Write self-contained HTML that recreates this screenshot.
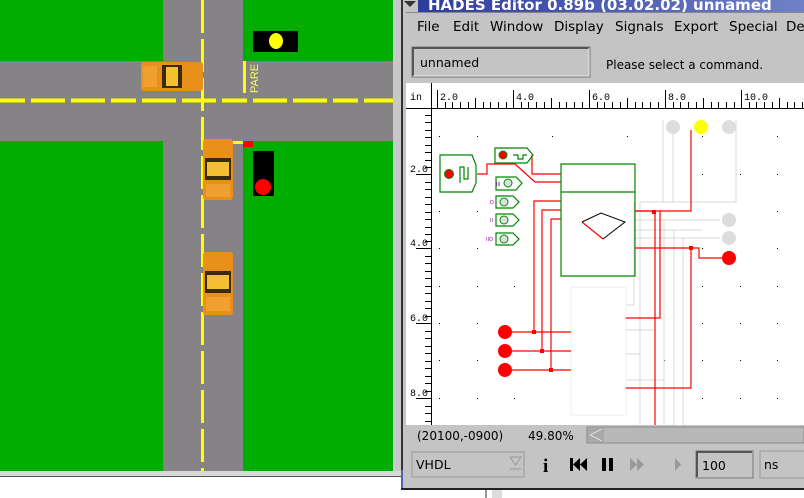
<!DOCTYPE html>
<html><head><meta charset="utf-8"><style>
*{margin:0;padding:0;box-sizing:border-box}
body{width:804px;height:498px;overflow:hidden;background:#fff;position:relative;font-family:"DejaVu Sans","Liberation Sans",sans-serif}
.a{position:absolute}
</style></head><body>
<svg class="a" style="left:0;top:0" width="804" height="498" viewBox="0 0 804 498" xmlns="http://www.w3.org/2000/svg">
<rect x="0" y="0" width="393" height="471" fill="#00ad00"/>
<rect x="393" y="0" width="8" height="476" fill="#c8c8c8"/>
<rect x="0" y="471" width="401" height="5" fill="#d8d8d8"/>
<rect x="0" y="476" width="401" height="1" fill="#555"/>
<rect x="0" y="61" width="393" height="80" fill="#858385"/>
<rect x="163" y="0" width="80" height="471" fill="#858385"/>
<line x1="0" y1="100.5" x2="393" y2="100.5" stroke="#ffff00" stroke-width="4" stroke-dasharray="25 6 34 6 34 6 0 0" />
<line x1="202.5" y1="0" x2="202.5" y2="471" stroke="#ffff00" stroke-width="3" stroke-dasharray="33 6"/>
<rect x="243" y="61" width="3" height="32" fill="#ffff00"/>
<text x="0" y="0" transform="translate(258,93) rotate(-90)" font-size="11" fill="#ffff60" font-family="Liberation Sans">PARE</text>
<rect x="233" y="141" width="10" height="3" fill="#ffff00"/>
<rect x="243" y="141" width="10" height="6" fill="#ff0000"/>
<rect x="253" y="31" width="45" height="21" fill="#000"/>
<ellipse cx="276" cy="41" rx="7" ry="8" fill="#ffff00"/>
<rect x="253" y="151" width="21" height="45" fill="#000"/>
<circle cx="263" cy="187" r="8" fill="#ff0000"/>
<g><rect x="141" y="62" width="62" height="29" rx="3" fill="#e8901a"/><rect x="162" y="65" width="20" height="23" fill="#3a2a10"/><rect x="166" y="67" width="12" height="19" fill="#f4c030"/><rect x="143" y="66" width="14" height="21" fill="#f0a030"/></g>
<g><rect x="203" y="139" width="30" height="61" rx="3" fill="#e8901a"/><rect x="205" y="158" width="26" height="22" fill="#3a2a10"/><rect x="207" y="162" width="22" height="14" fill="#f4c030"/><rect x="206" y="184" width="24" height="13" fill="#f0a030"/></g>
<g><rect x="203" y="252" width="30" height="63" rx="3" fill="#e8901a"/><rect x="205" y="271" width="26" height="22" fill="#3a2a10"/><rect x="207" y="275" width="22" height="14" fill="#f4c030"/><rect x="206" y="297" width="24" height="14" fill="#f0a030"/></g>

<rect x="401" y="0" width="403" height="490" fill="#c4c4c4"/>
<rect x="401" y="0" width="2" height="490" fill="#333"/>
<rect x="401" y="470" width="22" height="20" fill="#5060b8"/>
<rect x="403" y="470" width="20" height="18" fill="#c4c4c4"/>
<rect x="401" y="488" width="403" height="2" fill="#222"/>
<defs><linearGradient id="tb" x1="0" x2="1"><stop offset="0" stop-color="#2a3a9a"/><stop offset="1" stop-color="#7080c8"/></linearGradient></defs>
<rect x="403" y="0" width="401" height="12" fill="url(#tb)"/>
<rect x="403" y="0" width="15" height="12" fill="#c4c4c4"/>
<path d="M404 1 L416 1 L410 7 Z" fill="#333"/>
<text x="428" y="10" font-size="15" font-weight="bold" fill="#fff">HADES Editor 0.89b (03.02.02)   unnamed</text>
<rect x="406" y="12" width="398" height="1" fill="#888"/>
<g font-size="13.5" fill="#000">
<text x="417" y="31">File</text><text x="453" y="31">Edit</text><text x="490" y="31">Window</text><text x="554" y="31">Display</text><text x="615" y="31">Signals</text><text x="674" y="31">Export</text><text x="729" y="31">Special</text><text x="786" y="31">De</text>
</g>
<rect x="412" y="47" width="178" height="30" fill="#c4c4c4" stroke="#777" stroke-width="1"/>
<path d="M413 76 V48 H589" stroke="#555" stroke-width="2" fill="none"/>
<path d="M413 76 H589 V48" stroke="#eee" stroke-width="1" fill="none"/>
<text x="420" y="67" font-size="12.5">unnamed</text>
<text x="606" y="69" font-size="12">Please select a command.</text>
<rect x="406" y="83" width="398" height="342" fill="#fff"/>
<g stroke="#000" stroke-width="1">
<line x1="406" y1="108.5" x2="804" y2="108.5"/>
<line x1="431.5" y1="83" x2="431.5" y2="425"/>
</g>
<g font-size="10" font-family="Liberation Mono" fill="#000">
<text x="410" y="100">in</text>
<text x="440" y="100">2.0</text><text x="516" y="100">4.0</text><text x="592" y="100">6.0</text><text x="668" y="100">8.0</text><text x="744" y="100">10.0</text>
<text x="410" y="172">2.0</text><text x="410" y="246">4.0</text><text x="410" y="321">6.0</text><text x="410" y="396">8.0</text>
</g>
<g stroke="#000" stroke-width="1">
<path d="M437.5 90V108M513.5 90V108M589.5 90V108M665.5 90V108M741.5 90V108 M445.5 102V108M452.5 102V108M460.5 102V108M468.5 102V108M475.5 98V108M483.5 102V108M490.5 102V108M498.5 102V108M506.5 102V108M521.5 102V108M528.5 102V108M536.5 102V108M544.5 102V108M551.5 98V108M559.5 102V108M566.5 102V108M574.5 102V108M582.5 102V108M597.5 102V108M604.5 102V108M612.5 102V108M620.5 102V108M627.5 98V108M635.5 102V108M642.5 102V108M650.5 102V108M658.5 102V108M673.5 102V108M680.5 102V108M688.5 102V108M696.5 102V108M703.5 98V108M711.5 102V108M718.5 102V108M726.5 102V108M734.5 102V108M749.5 102V108M756.5 102V108M764.5 102V108M772.5 102V108M779.5 98V108M787.5 102V108M794.5 102V108M802.5 102V108"/>
<path d="M416 174.5H431M416 248.5H431M416 323.5H431M416 398.5H431 M425 115.5H431M425 122.5H431M425 130.5H431M425 137.5H431M425 145.5H431M425 152.5H431M425 160.5H431M425 167.5H431M425 182.5H431M425 189.5H431M425 197.5H431M425 204.5H431M425 212.5H431M425 219.5H431M425 227.5H431M425 234.5H431M425 241.5H431M425 256.5H431M425 263.5H431M425 271.5H431M425 278.5H431M425 286.5H431M425 293.5H431M425 301.5H431M425 308.5H431M425 316.5H431M425 331.5H431M425 338.5H431M425 346.5H431M425 353.5H431M425 361.5H431M425 368.5H431M425 376.5H431M425 383.5H431M425 391.5H431M425 406.5H431M425 413.5H431M425 421.5H431"/>
</g>
<g fill="#000">
<rect x="439" y="136" width="1" height="1"/><rect x="477" y="136" width="1" height="1"/><rect x="552" y="136" width="1" height="1"/><rect x="627" y="136" width="1" height="1"/><rect x="702" y="136" width="1" height="1"/><rect x="777" y="136" width="1" height="1"/>
<rect x="702" y="174" width="1" height="1"/><rect x="740" y="174" width="1" height="1"/><rect x="777" y="174" width="1" height="1"/>
<rect x="439" y="211" width="1" height="1"/><rect x="477" y="211" width="1" height="1"/><rect x="777" y="211" width="1" height="1"/>
<rect x="439" y="248" width="1" height="1"/><rect x="477" y="248" width="1" height="1"/><rect x="702" y="248" width="1" height="1"/><rect x="777" y="248" width="1" height="1"/>
<rect x="439" y="286" width="1" height="1"/><rect x="477" y="286" width="1" height="1"/><rect x="514" y="286" width="1" height="1"/><rect x="702" y="286" width="1" height="1"/><rect x="740" y="286" width="1" height="1"/><rect x="777" y="286" width="1" height="1"/>
<rect x="439" y="323" width="1" height="1"/><rect x="477" y="323" width="1" height="1"/><rect x="702" y="323" width="1" height="1"/><rect x="740" y="323" width="1" height="1"/><rect x="777" y="323" width="1" height="1"/>
<rect x="439" y="360" width="1" height="1"/><rect x="477" y="360" width="1" height="1"/><rect x="664" y="360" width="1" height="1"/><rect x="702" y="360" width="1" height="1"/><rect x="740" y="360" width="1" height="1"/><rect x="777" y="360" width="1" height="1"/>
<rect x="439" y="398" width="1" height="1"/><rect x="477" y="398" width="1" height="1"/><rect x="514" y="398" width="1" height="1"/><rect x="702" y="398" width="1" height="1"/><rect x="740" y="398" width="1" height="1"/><rect x="777" y="398" width="1" height="1"/>
</g>
<g stroke="#d8d8d8" stroke-width="1" fill="none">
<path d="M663 120V202M736 120V202H640V425"/>
<path d="M673 130V202"/>
<path d="M635 220H720M664 220V425"/>
<path d="M635 230H702M674 230V425"/>
<path d="M635 238H720M683 238V425"/>
<path d="M626 305H634V202M626 354H640M626 380H664M626 330H655V220"/>
<path d="M571 287H626V415H571Z" stroke="#eee"/>
</g>
<g stroke="#ff0000" stroke-width="1.2" fill="none">
<path d="M477 174H487V164H515L535 182H561"/>
<path d="M532 155V174H561"/>
<path d="M561 201H534V332"/><path d="M561 210H542V351"/><path d="M561 219H551V370"/>
<path d="M512 332H571M512 351H571M512 370H571"/>
<path d="M635 211H691V130"/>
<path d="M635 248H699V258H722"/>
<path d="M635 211H655V425"/>
<path d="M626 318H660V211"/><path d="M626 388H691V248"/>
<path d="M582 222L603 239"/>
</g>
<g fill="#ff0000">
<rect x="652" y="210" width="4" height="4"/><rect x="689" y="246" width="4" height="4"/><rect x="532" y="330" width="4" height="4"/><rect x="540" y="349" width="4" height="4"/><rect x="549" y="368" width="4" height="4"/>
</g>
<g fill="none" stroke="#008800" stroke-width="1.2">
<path d="M440 155H472L476 165V183L472 192H440Z"/>
<path d="M495 148H527L533 155L527 163H495Z"/>
<path d="M561 164H635V192H561Z M561 192H635V276H561Z"/>
<path d="M496 177H516L522 183L516 190H496Z"/>
<path d="M496 196H513L519 202L513 208H496Z"/>
<path d="M496 214H513L519 220L513 226H496Z"/>
<path d="M496 233H513L519 239L513 245H496Z"/>
<path d="M460 183V167H464V179H468V167"/>
<path d="M513 155H518V159H523V155H527"/>
</g>
<circle cx="449" cy="174" r="4.5" fill="#ff0000" stroke="#008800"/>
<circle cx="503" cy="155" r="4" fill="#ff0000" stroke="#008800"/>
<g fill="#ddd" stroke="#008800"><circle cx="508" cy="183" r="4"/><circle cx="504" cy="202" r="4"/><circle cx="504" cy="220" r="4"/><circle cx="504" cy="239" r="4"/></g>
<g font-size="5" fill="#9900aa"><text x="496" y="186">III</text><text x="490" y="204">D</text><text x="490" y="222">II</text><text x="486" y="241">IIO</text></g>
<path d="M582 222L601 213L625 222L603 239" stroke="#000" fill="none"/>
<g fill="#ddd"><circle cx="673" cy="127" r="7"/><circle cx="729" cy="127" r="7"/><circle cx="729" cy="220" r="7"/><circle cx="729" cy="238" r="7"/></g>
<circle cx="701" cy="127" r="7" fill="#ffff00"/>
<g fill="#ff0000"><circle cx="729" cy="258" r="7"/><circle cx="505" cy="332" r="7"/><circle cx="505" cy="351" r="7"/><circle cx="505" cy="370" r="7"/></g>
<text x="417" y="440" font-size="12">(20100,-0900)</text>
<text x="528" y="440" font-size="12">49.80%</text>
<rect x="587" y="427" width="217" height="16" fill="#b8b8b8" stroke="#888"/>
<rect x="588" y="428" width="16" height="14" fill="#a8a8a8"/>
<path d="M602 429L590 435L602 441" stroke="#ddd" fill="none"/>
<rect x="412" y="452" width="112" height="25" fill="#c4c4c4" stroke="#999"/>
<text x="416" y="469" font-size="12.5">VHDL</text>
<path d="M510 457H521L515.5 465Z" fill="none" stroke="#999"/><line x1="510" y1="469" x2="521" y2="469" stroke="#999"/>
<text x="543" y="472" font-size="19" font-weight="bold" font-family="Liberation Serif">i</text>
<path d="M570 458H573V471H570Z M573 464.5L580 458V471Z M580 464.5L587 458V471Z" fill="#000"/>
<path d="M602 458H606V471H602Z M609 458H613V471H609Z" fill="#000"/>
<path d="M630 458L637 464.5L630 471Z M637 458L644 464.5L637 471Z" fill="#999"/>
<path d="M675 458L681 464.5L675 471Z" fill="#999"/>
<rect x="696" y="451" width="57" height="27" fill="#c4c4c4" stroke="#777"/>
<path d="M697 477V452H752" stroke="#555" stroke-width="2" fill="none"/>
<text x="702" y="470" font-size="12.5">100</text>
<rect x="760" y="451" width="50" height="27" fill="#c4c4c4" stroke="#999"/>
<text x="764" y="469" font-size="12.5">ns</text>
<rect x="485" y="490" width="2" height="8" fill="#999"/><rect x="492" y="490" width="10" height="8" fill="#ddd"/>
</svg>
</body></html>
